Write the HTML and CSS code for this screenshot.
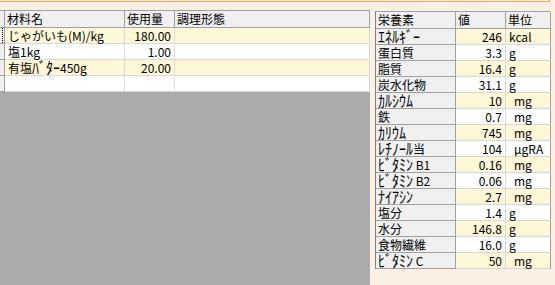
FILE: index.html
```html
<!DOCTYPE html>
<html>
    <head>
        <title>材料と栄養素</title>
        <link rel="stylesheet" href="styles.css">
    </head>
    <body>
        <div class="topbar"></div>
        <div class="panes">
            <div class="grid ingredients">
                <div class="head corner"></div>
                <div class="head">材料名</div>
                <div class="head">使用量</div>
                <div class="head">調理形態</div>

                <div class="rowhead"><span class="focus"></span></div>
                <div class="cell alt">じゃがいも(M)/kg</div>
                <div class="cell alt num">180.00</div>
                <div class="cell alt"></div>

                <div class="rowhead"></div>
                <div class="cell">塩1kg</div>
                <div class="cell num">1.00</div>
                <div class="cell"></div>

                <div class="rowhead"></div>
                <div class="cell alt">有塩<span class="hw">ﾊﾞﾀｰ</span>450g</div>
                <div class="cell alt num">20.00</div>
                <div class="cell alt"></div>

                <div class="rowhead"></div>
                <div class="cell"></div>
                <div class="cell"></div>
                <div class="cell"></div>
            </div>

            <div class="grid nutrients">
                <div class="head">栄養素</div>
                <div class="head">値</div>
                <div class="head">単位</div>

                <div class="name"><span class="hw">ｴﾈﾙｷﾞｰ</span></div><div class="cell alt num">246</div><div class="cell alt">kcal</div>
                <div class="name">蛋白質</div><div class="cell num">3.3</div><div class="cell">g</div>
                <div class="name">脂質</div><div class="cell alt num">16.4</div><div class="cell alt">g</div>
                <div class="name">炭水化物</div><div class="cell num">31.1</div><div class="cell">g</div>
                <div class="name"><span class="hw">ｶﾙｼｳﾑ</span></div><div class="cell alt num">10</div><div class="cell alt unit">mg</div>
                <div class="name">鉄</div><div class="cell num">0.7</div><div class="cell unit">mg</div>
                <div class="name"><span class="hw">ｶﾘｳﾑ</span></div><div class="cell alt num">745</div><div class="cell alt unit">mg</div>
                <div class="name"><span class="hw">ﾚﾁﾉｰﾙ</span>当</div><div class="cell num">104</div><div class="cell unit">μgRA</div>
                <div class="name"><span class="hw">ﾋﾞﾀﾐﾝ</span> B1</div><div class="cell alt num">0.16</div><div class="cell alt unit">mg</div>
                <div class="name"><span class="hw">ﾋﾞﾀﾐﾝ</span> B2</div><div class="cell num">0.06</div><div class="cell unit">mg</div>
                <div class="name"><span class="hw">ﾅｲｱｼﾝ</span></div><div class="cell alt num">2.7</div><div class="cell alt unit">mg</div>
                <div class="name">塩分</div><div class="cell num">1.4</div><div class="cell">g</div>
                <div class="name">水分</div><div class="cell alt num">146.8</div><div class="cell alt">g</div>
                <div class="name">食物繊維</div><div class="cell num">16.0</div><div class="cell">g</div>
                <div class="name"><span class="hw">ﾋﾞﾀﾐﾝ</span> C</div><div class="cell alt num">50</div><div class="cell alt unit">mg</div>
            </div>
        </div>
    </body>
</html>
```

FILE: styles.css
```css
html, body {
    margin: 0;
    height: 100%;
    overflow: hidden;
}

body {
    background: #fcefe4;
    font-family: "Noto Sans CJK JP", "Noto Sans", sans-serif;
    font-size: 12px;
    color: #000;
}

.topbar {
    width: 549px;
    height: 1px;
    border-bottom: 1px solid #f5a55a;
    border-right: 1px solid #f5a55a;
}

.panes {
    display: flex;
    align-items: flex-start;
    margin-top: 8px;
}

.grid {
    display: grid;
    grid-auto-rows: 16px;
    box-sizing: border-box;
}

.grid > div {
    box-sizing: border-box;
    line-height: 15px;
    padding: 0 3px;
    white-space: nowrap;
}

.hw {
    display: inline-block;
    font-size: 14px;
    line-height: 15px;
    vertical-align: top;
    transform: scaleY(1.15);
    transform-origin: 50% 60%;
}

/* left: ingredient list */
.ingredients {
    width: 370px;
    height: 280px;
    grid-template-columns: 5px 120px 50px 1fr;
    grid-template-rows: 17px;
    align-content: start;
    background: #ababab;
    border-top: 1px solid #a0a0a0;
}

/* right: nutrient table */
.nutrients {
    width: 175px;
    margin: 1px 0 0 5px;
    grid-template-columns: 80px 50px 45px;
    grid-template-rows: 17px;
    border-top: 1px solid #a0a0a0;
    border-left: 1px solid #808080;
}

.head {
    background: #f0f0f0;
    border-right: 1px solid #a0a0a0;
    border-bottom: 1px solid #a0a0a0;
    line-height: 16px !important;
    padding: 0 2px !important;
}

.head.corner,
.rowhead {
    padding: 0 !important;
}

.rowhead {
    position: relative;
    background: #f0f0f0;
    border-right: 1px solid #a0a0a0;
    border-bottom: 1px solid #a0a0a0;
}

.rowhead .focus {
    position: absolute;
    left: 2px;
    top: 0;
    bottom: 0;
    border-left: 1px dotted #000;
}

.cell {
    background: #fff;
    border-right: 1px solid #d8d8d8;
    border-bottom: 1px solid #d8d8d8;
}

.cell.alt {
    background: #fdf8d8;
}

.cell.num {
    text-align: right;
}

.cell.unit {
    padding-left: 8px !important;
}

.name {
    background: #f0f0f0;
    border-right: 1px solid #a0a0a0;
    border-bottom: 1px solid #a0a0a0;
    padding: 0 2px !important;
}

.nutrients .head:last-of-type,
.nutrients .cell:nth-child(3n) {
    border-right-color: #a0a0a0;
}
```
